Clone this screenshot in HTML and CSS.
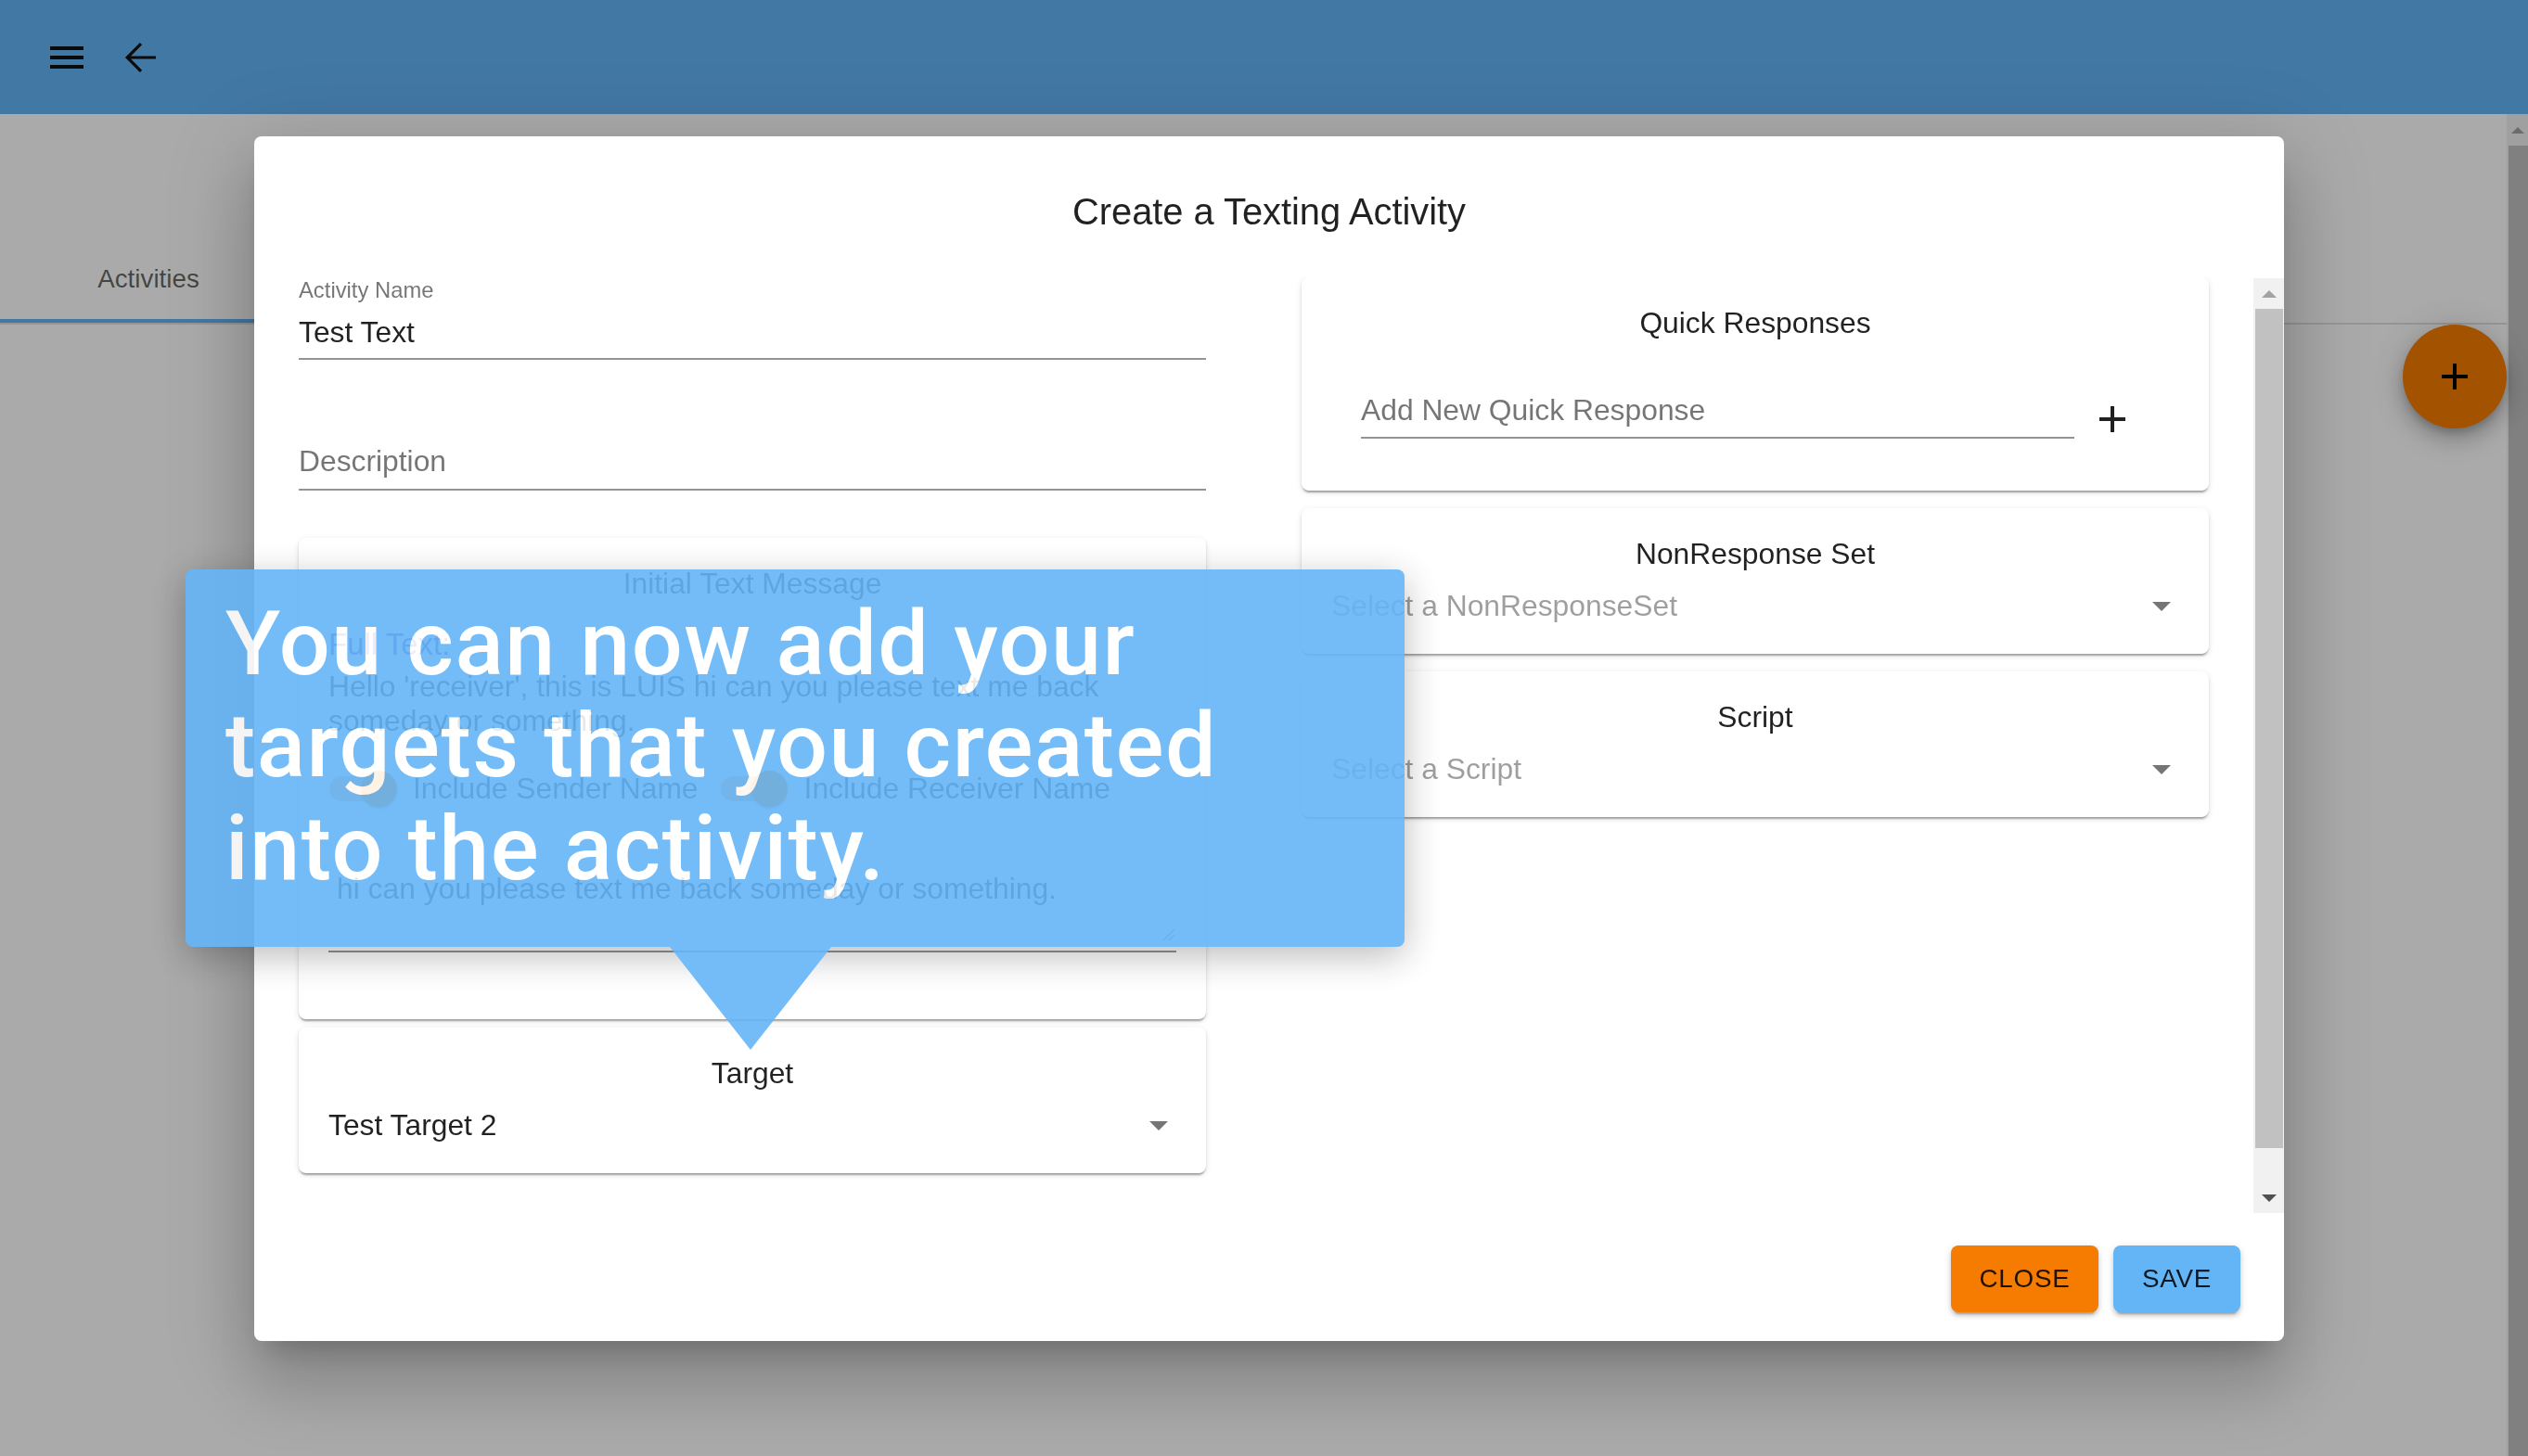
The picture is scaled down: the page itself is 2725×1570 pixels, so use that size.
FILE: index.html
```html
<!DOCTYPE html>
<html lang="en">
<head>
<meta charset="utf-8">
<title>Create a Texting Activity</title>
<link rel="stylesheet" href="styles.css">
</head>
<body>
<div class="screen">
  <header class="appbar">
    <span class="icon-btn">
      <svg viewBox="0 0 24 24" width="48" height="48"><path d="M3 18h18v-2H3v2zm0-5h18v-2H3v2zm0-7v2h18V6H3z"/></svg>
    </span>
    <span class="icon-btn">
      <svg viewBox="0 0 24 24" width="48" height="48"><path d="M20 12H5 M12 4.6 L4.6 12 L12 19.4" fill="none" stroke="#111" stroke-width="1.6"/></svg>
    </span>
  </header>
  <div class="below">
    <main class="main">
      <div class="spacer"></div>
      <nav class="tabs">
        <div class="tab active">Activities</div>
      </nav>
    </main>
    <div class="page-scroll">
      <div class="ps-btn"><span class="tri-up small"></span></div>
      <div class="ps-thumb"></div>
    </div>
  </div>
  <span class="fab">
    <svg viewBox="0 0 24 24" width="48" height="48"><path d="M19 13h-6v6h-2v-6H5v-2h6V5h2v6h6v2z"/></svg>
  </span>
</div>

<div class="backdrop"></div>

<section class="dialog">
  <h2 class="dialog-title">Create a Texting Activity</h2>
  <div class="dialog-body">
    <div class="dialog-content">
      <div class="col">
        <div class="field">
          <div class="f-label-small">Activity Name</div>
          <div class="f-input">Test Text</div>
        </div>
        <div class="field field-empty">
          <div class="f-placeholder">Description</div>
        </div>
        <div class="card card-initial">
          <div class="card-title">Initial Text Message</div>
          <div class="full-label">Full Text:</div>
          <div class="full-text">Hello 'receiver', this is LUIS hi can you please text me back someday or something.</div>
          <div class="switch-row">
            <label class="fcl">
              <span class="switch"><span class="track"></span><span class="thumb"></span></span>
              <span class="fcl-text">Include Sender Name</span>
            </label>
            <label class="fcl">
              <span class="switch"><span class="track"></span><span class="thumb"></span></span>
              <span class="fcl-text">Include Receiver Name</span>
            </label>
          </div>
          <div class="textarea">
            <div class="textarea-text">hi can you please text me back someday or something.</div>
            <svg class="grip" viewBox="0 0 16 16" width="16" height="16"><path d="M15 3 L3 15 M15 9 L9 15" stroke="#8a8a8a" stroke-width="1.2" fill="none"/></svg>
          </div>
        </div>
        <div class="card card-select">
          <div class="card-title">Target</div>
          <div class="select-row">
            <span class="select-value">Test Target 2</span>
            <svg class="dd" viewBox="0 0 20 10" width="20" height="10"><path d="M0 0h20L10 10z"/></svg>
          </div>
        </div>
      </div>
      <div class="col">
        <div class="card card-qr">
          <div class="card-title">Quick Responses</div>
          <div class="qr-row">
            <div class="qr-input">Add New Quick Response</div>
            <span class="qr-add">
              <svg viewBox="0 0 24 24" width="48" height="48"><path d="M19 13h-6v6h-2v-6H5v-2h6V5h2v6h6v2z"/></svg>
            </span>
          </div>
        </div>
        <div class="card card-select">
          <div class="card-title">NonResponse Set</div>
          <div class="select-row">
            <span class="select-placeholder">Select a NonResponseSet</span>
            <svg class="dd" viewBox="0 0 20 10" width="20" height="10"><path d="M0 0h20L10 10z"/></svg>
          </div>
        </div>
        <div class="card card-select">
          <div class="card-title">Script</div>
          <div class="select-row">
            <span class="select-placeholder">Select a Script</span>
            <svg class="dd" viewBox="0 0 20 10" width="20" height="10"><path d="M0 0h20L10 10z"/></svg>
          </div>
        </div>
      </div>
    </div>
    <div class="vscroll">
      <div class="vs-btn"><span class="tri-up"></span></div>
      <div class="vs-thumb"></div>
      <div class="vs-track"></div>
      <div class="vs-btn"><span class="tri-down"></span></div>
    </div>
  </div>
  <div class="dialog-actions">
    <span class="btn btn-close">Close</span>
    <span class="btn btn-save">Save</span>
  </div>
</section>

<div class="tour">
  <div class="tour-body">You can now add your<br>targets that you created<br>into the activity.</div>
  <div class="tour-arrow"></div>
</div>
</body>
</html>
```

FILE: styles.css
```css
html, body {
  margin: 0;
  padding: 0;
  width: 2725px;
  height: 1570px;
  overflow: hidden;
  background: #fff;
  font-family: "Liberation Sans", Arial, sans-serif;
  color: rgba(0, 0, 0, 0.87);
}

.screen {
  width: 2725px;
  height: 1570px;
  display: flex;
  flex-direction: column;
}

/* ---------- app bar ---------- */
.appbar {
  height: 123px;
  flex: none;
  background: #64b5f6;
  display: flex;
  align-items: center;
  padding-left: 48px;
  gap: 32px;
  box-sizing: border-box;
}
.icon-btn {
  width: 48px;
  height: 48px;
  display: block;
}
.icon-btn svg { display: block; fill: #111; }

.below {
  flex: 1;
  display: flex;
}
.main {
  flex: 1;
}
.spacer { height: 131px; }
.tabs {
  display: flex;
  border-bottom: 2px solid rgba(0, 0, 0, 0.12);
}
.tab {
  width: 320px;
  height: 94px;
  box-sizing: border-box;
  display: flex;
  align-items: center;
  justify-content: center;
  font-size: 27.8px;
  color: rgba(0, 0, 0, 0.6);
  padding-top: 4px;
}
.tab.active { border-bottom: 4px solid #64b5f6; }

.page-scroll {
  width: 23px;
  background: #f1f1f1;
  display: flex;
  flex-direction: column;
}
.ps-btn {
  height: 34px;
  display: flex;
  align-items: center;
  justify-content: center;
}
.ps-thumb {
  flex: 1;
  background: #c1c1c1;
  margin-left: 2px;
}

.fab {
  position: absolute;
  left: 2590px;
  top: 350px;
  width: 112px;
  height: 112px;
  border-radius: 50%;
  background: #f57c00;
  display: flex;
  align-items: center;
  justify-content: center;
  box-shadow: 0 6px 10px -2px rgba(0,0,0,0.2), 0 12px 20px 2px rgba(0,0,0,0.14), 0 4px 36px 4px rgba(0,0,0,0.12);
}
.fab svg { fill: #000; display: block; }

.tri-up {
  width: 0; height: 0;
  border-left: 8px solid transparent;
  border-right: 8px solid transparent;
  border-bottom: 8px solid #a3a3a3;
}
.tri-up.small {
  border-left-width: 7px;
  border-right-width: 7px;
  border-bottom-width: 7px;
}
.tri-down {
  width: 0; height: 0;
  border-left: 8px solid transparent;
  border-right: 8px solid transparent;
  border-top: 8px solid #505050;
}

/* ---------- backdrop ---------- */
.backdrop {
  position: fixed;
  inset: 0;
  background: rgba(0, 0, 0, 0.335);
}

/* ---------- dialog ---------- */
.dialog {
  position: absolute;
  left: 274px;
  top: 147px;
  width: 2188px;
  height: 1299px;
  background: #fff;
  border-radius: 8px;
  display: flex;
  flex-direction: column;
  box-shadow: 0 21px 29px -14px rgba(0,0,0,0.2), 0 47px 74px 6px rgba(0,0,0,0.14), 0 18px 90px 16px rgba(0,0,0,0.12);
}
.dialog-title {
  margin: 0;
  height: 152px;
  box-sizing: border-box;
  padding-top: 50px;
  font-size: 39.8px;
  line-height: 62px;
  font-weight: 400;
  text-align: center;
  color: rgba(0, 0, 0, 0.87);
  flex: none;
}
.dialog-body {
  height: 1009px;
  display: flex;
  flex: none;
}
.dialog-content {
  flex: 1;
  padding: 0 48px;
  display: grid;
  grid-template-columns: 1fr 1fr;
  column-gap: 103px;
  align-items: start;
  overflow: hidden;
}
.col {
  display: flex;
  flex-direction: column;
}

.vscroll {
  width: 33px;
  background: #f1f1f1;
  display: flex;
  flex-direction: column;
  margin-top: 1px;
}
.vs-btn {
  height: 33px;
  display: flex;
  align-items: center;
  justify-content: center;
}
.vs-thumb {
  height: 905px;
  background: #c1c1c1;
  margin: 0 1px 0 2px;
}
.vs-track { flex: 1; }

.dialog-actions {
  flex: 1;
  display: flex;
  justify-content: flex-end;
  align-items: flex-start;
  gap: 16px;
  padding: 35px 47px 0 0;
}
.btn {
  display: block;
  height: 72px;
  box-sizing: border-box;
  font-size: 27.8px;
  line-height: 48px;
  letter-spacing: 0.78px;
  text-transform: uppercase;
  color: rgba(0, 0, 0, 0.87);
  border-radius: 8px;
  text-align: center;
  padding: 12px 0;
  box-shadow: 0 6px 2px -4px rgba(0,0,0,0.2), 0 4px 4px 0 rgba(0,0,0,0.14), 0 2px 10px 0 rgba(0,0,0,0.12);
}
.btn-close { background: #f57c00; width: 159px; }
.btn-save { background: #64b5f6; width: 137px; }

/* ---------- fields ---------- */
.field {
  border-bottom: 2px solid rgba(0, 0, 0, 0.42);
}
.f-label-small {
  font-size: 23.8px;
  line-height: 28px;
  color: rgba(0, 0, 0, 0.54);
}
.f-input {
  font-size: 31.8px;
  line-height: 38px;
  margin-top: 12px;
  padding-bottom: 9px;
  color: rgba(0, 0, 0, 0.87);
}
.field-empty { padding-top: 90px; }
.f-placeholder {
  font-size: 31.8px;
  line-height: 38px;
  padding-bottom: 11px;
  color: rgba(0, 0, 0, 0.54);
}

/* ---------- cards ---------- */
.card {
  background: #fff;
  border-radius: 8px;
  padding: 31px 32px 32px;
  box-shadow: 0 4px 2px -2px rgba(0,0,0,0.2), 0 2px 2px 0 rgba(0,0,0,0.14), 0 2px 6px 0 rgba(0,0,0,0.12);
}
.card-title {
  font-size: 31.8px;
  line-height: 37px;
  text-align: center;
  color: rgba(0, 0, 0, 0.87);
}
.card-initial {
  margin-top: 51px;
  padding-bottom: 72px;
}
.card-initial + .card-select { margin-top: 9px; }
.card-qr + .card-select,
.card-select + .card-select { margin-top: 19px; }

.select-row {
  margin-top: 19px;
  display: flex;
  align-items: center;
  justify-content: space-between;
  font-size: 31.8px;
  line-height: 37px;
  margin-bottom: 1px;
}
.select-value { color: rgba(0, 0, 0, 0.87); }
.select-placeholder { color: rgba(0, 0, 0, 0.38); }
.dd {
  display: block;
  fill: rgba(0, 0, 0, 0.54);
  margin-right: 9px;
}

.full-label {
  margin-top: 27px;
  font-size: 33px;
  line-height: 40px;
  color: #5e35b1;
}
.full-text {
  margin-top: 7px;
  font-size: 31.8px;
  line-height: 36.5px;
  color: rgba(0, 0, 0, 0.87);
}
.switch-row {
  margin-top: 18px;
  height: 74px;
  display: flex;
  align-items: center;
}
.fcl {
  display: flex;
  align-items: center;
  margin-right: 23px;
  margin-left: -22px;
}
.fcl-text {
  font-size: 31.8px;
  line-height: 37px;
  color: rgba(0, 0, 0, 0.87);
}
.switch {
  position: relative;
  width: 113px;
  height: 74px;
  display: block;
}
.track {
  position: absolute;
  left: 23px;
  top: 23.5px;
  width: 66px;
  height: 27px;
  border-radius: 14px;
  background: #f57c00;
  opacity: 0.5;
}
.thumb {
  position: absolute;
  left: 56.5px;
  top: 17.5px;
  width: 39px;
  height: 39px;
  border-radius: 50%;
  background: #f57c00;
  box-shadow: 0 3px 2px -2px rgba(0,0,0,0.2), 0 2px 2px 0 rgba(0,0,0,0.14), 0 2px 6px 0 rgba(0,0,0,0.12);
}
.textarea {
  position: relative;
  margin-top: 53px;
  padding: 0 0 11px 9px;
  border-bottom: 2px solid rgba(0, 0, 0, 0.42);
}
.textarea-text {
  height: 74px;
  font-size: 31.8px;
  line-height: 37px;
  color: rgba(0, 0, 0, 0.87);
}
.grip {
  position: absolute;
  right: 1px;
  bottom: 10px;
}

/* quick responses */
.card-qr { padding-bottom: 56px; }
.qr-row {
  margin-top: 57px;
  display: flex;
  align-items: flex-start;
  padding-left: 32px;
}
.qr-input {
  width: 769px;
  font-size: 31.8px;
  line-height: 37px;
  padding-bottom: 10px;
  border-bottom: 2px solid rgba(0, 0, 0, 0.42);
  color: rgba(0, 0, 0, 0.54);
}
.qr-add {
  display: block;
  width: 48px;
  height: 48px;
  margin-left: 17px;
  margin-top: 4px;
  margin-bottom: -3px;
}
.qr-add svg { display: block; fill: rgba(0, 0, 0, 0.87); }

/* ---------- tour tooltip ---------- */
.tour {
  position: absolute;
  left: 200px;
  top: 614px;
  width: 1314px;
  height: 407px;
  opacity: 0.9;
}
.tour-body {
  width: 100%;
  height: 100%;
  box-sizing: border-box;
  background: #64b5f6;
  border-radius: 8px;
  padding: 24.6px 40px 0 43px;
  font-family: Roboto, "Noto Sans", sans-serif;
  font-weight: 500;
  font-size: 97px;
  line-height: 110.5px;
  letter-spacing: 1.5px;
  color: #fff;
  white-space: nowrap;
  box-shadow: 0 10px 40px rgba(0, 0, 0, 0.3);
}
.tour-arrow {
  position: absolute;
  left: 522px;
  top: 407px;
  width: 0;
  height: 0;
  border-left: 87px solid transparent;
  border-right: 87px solid transparent;
  border-top: 111px solid #64b5f6;
}
```
